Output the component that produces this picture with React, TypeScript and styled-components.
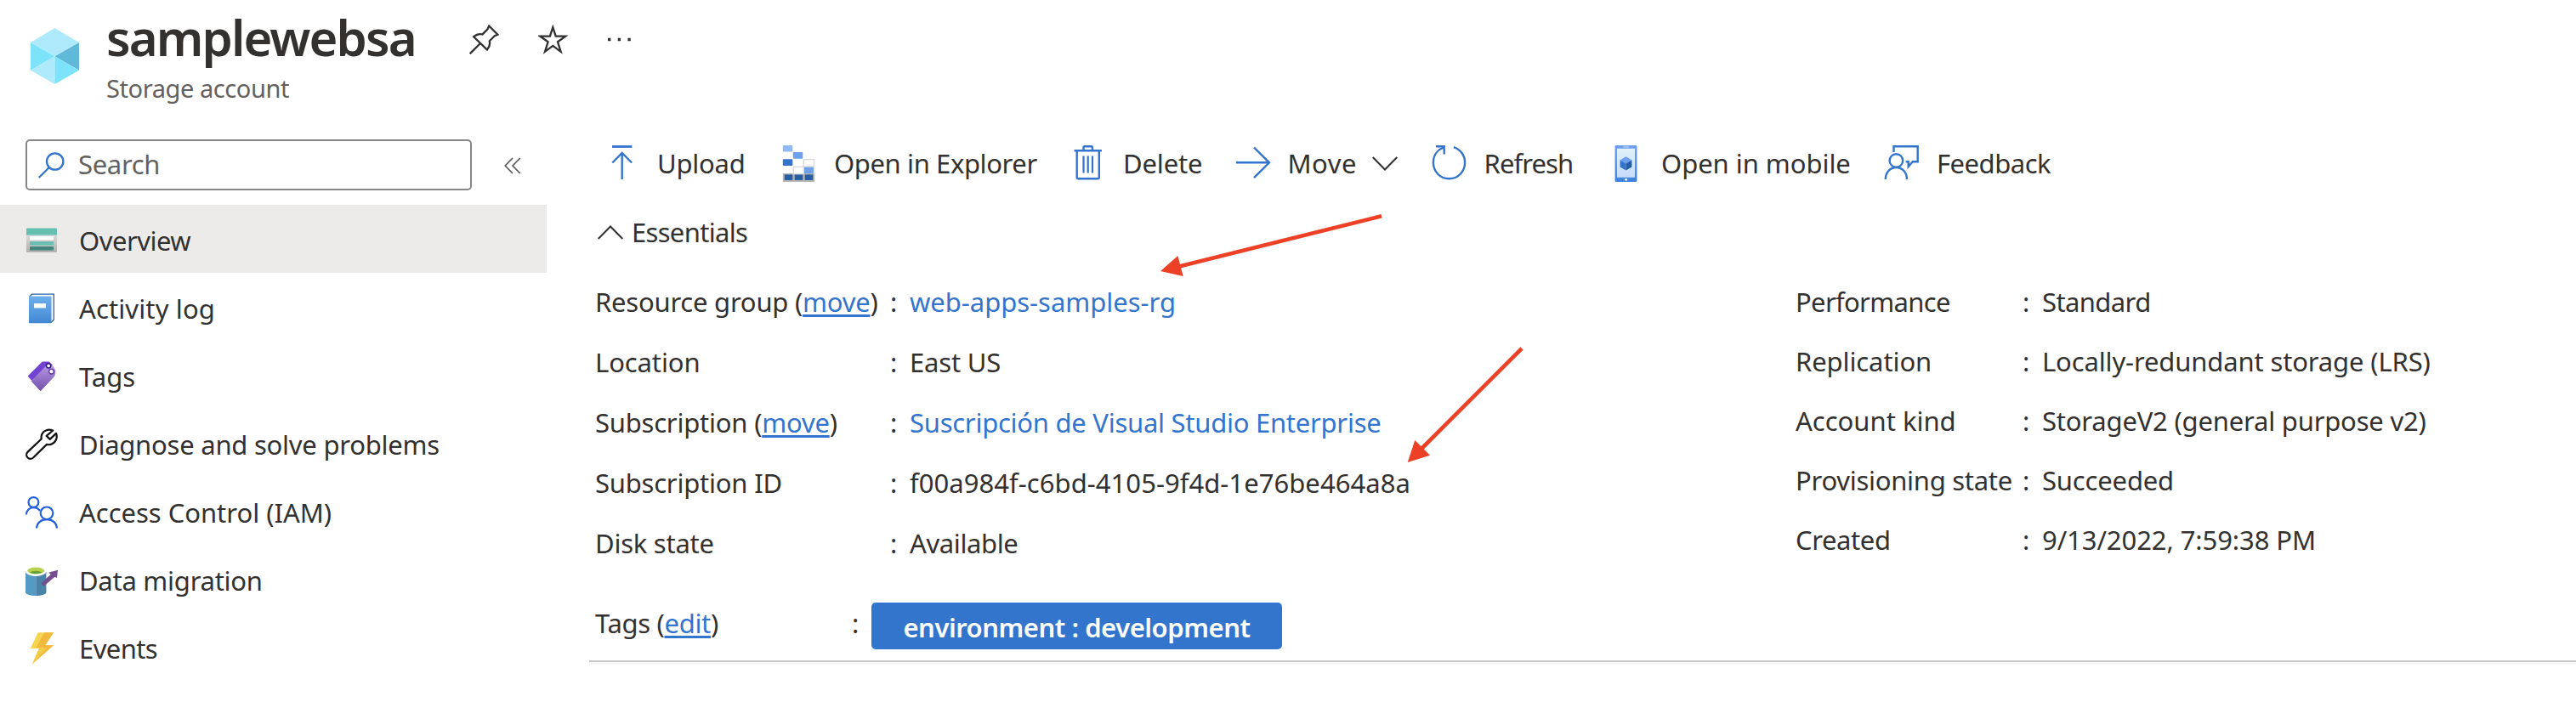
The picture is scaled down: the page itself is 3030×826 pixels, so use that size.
import React from 'react';
import styled, { createGlobalStyle } from 'styled-components';

const ink = '#323130';
const muted = '#636160';
const blue = '#3375cd';

const GlobalStyle = createGlobalStyle`
  * { box-sizing: border-box; }
  html, body { margin: 0; padding: 0; background: #fff; }
  body {
    font-family: "Noto Sans", "Open Sans", sans-serif;
    font-size: 31px;
    color: ${ink};
  }
`;

const Page = styled.div`
  position: relative;
  width: 3030px;
  height: 826px;
  overflow: hidden;
  background: #fff;
`;

/* ---------- text ---------- */

const Label = styled.span<{ $track?: number }>`
  letter-spacing: ${(p) => p.$track ?? 0}px;
  white-space: nowrap;
`;

const Link = styled.a<{ $underline?: boolean }>`
  color: ${blue};
  text-decoration: ${(p) => (p.$underline ? 'underline' : 'none')};
  text-decoration-thickness: 3px;
  text-underline-offset: 3px;
  text-decoration-skip-ink: none;
`;

/* ---------- header ---------- */

const Header = styled.header`
  display: flex;
  align-items: flex-start;
  height: 121px;
  padding-left: 36px;
`;

const ResourceIcon = styled.svg`
  width: 57px;
  height: 66px;
  margin-top: 33px;
`;

const TitleBlock = styled.div`
  width: 427px;
  margin-left: 32px;
`;

const Title = styled.h1`
  margin: 0;
  font-size: 58px;
  line-height: 87px;
  font-weight: 600;
  letter-spacing: -1.9px;
`;

const Subtitle = styled.div`
  font-size: 29px;
  line-height: 34px;
  letter-spacing: -0.42px;
  color: ${muted};
`;

const HeaderActions = styled.div`
  display: flex;
  align-items: center;
  margin-top: 29px;
  gap: 45.5px;
`;

const ActionIcon = styled.svg`
  width: 35px;
  height: 35px;
  fill: none;
  stroke: ${ink};
  stroke-width: 2.3;
`;

/* ---------- side menu ---------- */

const Body = styled.div`
  display: flex;
`;

const SideMenu = styled.aside`
  width: 643px;
  padding-top: 43px;
`;

const SearchRow = styled.div`
  display: flex;
  align-items: center;
  padding-left: 30px;
  gap: 38px;
`;

const SearchBox = styled.div`
  display: flex;
  align-items: center;
  width: 525px;
  height: 60px;
  padding: 0 13px;
  gap: 16px;
  border: 2px solid #868686;
  border-radius: 5px;
  color: ${muted};
`;

const SearchText = styled(Label)`
  padding-bottom: 2px;
`;

const SearchGlyph = styled.svg`
  width: 31px;
  height: 31px;
  fill: none;
  stroke: ${blue};
  stroke-width: 2.3;
`;

const CollapseGlyph = styled.svg`
  width: 20px;
  height: 20px;
  margin-top: 2px;
  fill: none;
  stroke: #555;
  stroke-width: 1.6;
`;

const Nav = styled.nav`
  margin-top: 17px;
`;

const NavItem = styled.div<{ $selected?: boolean }>`
  display: flex;
  align-items: center;
  height: 80px;
  padding: 3px 0 0 30px;
  gap: 25px;
  background: ${(p) => (p.$selected ? '#ecebe9' : 'transparent')};
`;

const NavIcon = styled.svg`
  width: 38px;
  height: 38px;
  overflow: visible;
`;

/* ---------- content ---------- */

const Content = styled.main`
  flex: 1;
  padding: 41px 0 0 50px;
`;

const Toolbar = styled.div`
  display: grid;
  grid-template-columns: 208px 340px 193.5px 231px 208.5px 324px auto;
  align-items: center;
  height: 60px;
  margin-left: 16px;
`;

const Command = styled.div`
  display: flex;
  align-items: center;
`;

const CommandIcon = styled.svg`
  width: 45px;
  height: 46px;
  margin-right: 19px;
  fill: none;
  stroke: ${blue};
  stroke-width: 2.4;
`;

const Chevron = styled.svg`
  width: 30px;
  height: 17px;
  fill: none;
  stroke: ${ink};
  stroke-width: 2;
`;

const MenuChevron = styled(Chevron)`
  margin-left: 18px;
`;

const EssentialsToggle = styled.div`
  display: flex;
  align-items: center;
  height: 50px;
  margin: 26px 0 0 10px;
  gap: 10px;
`;

const Properties = styled.section`
  display: flex;
  align-items: flex-start;
  height: 354px;
  margin: 22px 0 0 7px;
`;

const PropertyList = styled.dl<{ $columns: string; $pitch: number; $width?: number }>`
  display: grid;
  grid-template-columns: ${(p) => p.$columns};
  grid-auto-rows: ${(p) => p.$pitch}px;
  line-height: ${(p) => p.$pitch}px;
  width: ${(p) => (p.$width ? `${p.$width}px` : 'auto')};
  margin: 0;
`;

const Term = styled.dt<{ $track: number }>`
  letter-spacing: ${(p) => p.$track}px;
  white-space: nowrap;
`;

const Value = styled.dd<{ $track: number }>`
  margin: 0;
  letter-spacing: ${(p) => p.$track}px;
  white-space: nowrap;
`;

const TagsRow = styled.div`
  display: grid;
  grid-template-columns: 302px 23px auto;
  justify-content: start;
  height: 55px;
  margin: 35px 0 0 7px;
  line-height: 49px;
`;

const TagChip = styled.div`
  width: 483px;
  height: 55px;
  padding-top: 2px;
  border-radius: 5px;
  background: ${blue};
  color: #fff;
  font-weight: 600;
  line-height: 55px;
  text-align: center;
  letter-spacing: -0.47px;
`;

const Divider = styled.div`
  height: 5px;
  margin-top: 13px;
  border-top: 2px solid #c8c8c8;
  background: #f7f7f7;
`;

const Annotations = styled.svg`
  position: absolute;
  inset: 0;
  width: 3030px;
  height: 826px;
  pointer-events: none;
`;

/* ---------- data ---------- */

type Entry = { term: string; link?: string; track: number; value: string; valueTrack: number; isLink?: boolean };

const leftEntries: Entry[] = [
  { term: 'Resource group', link: 'move', track: -0.23, value: 'web-apps-samples-rg', valueTrack: -0.02, isLink: true },
  { term: 'Location', track: -0.1, value: 'East US', valueTrack: -0.2 },
  { term: 'Subscription', link: 'move', track: -0.22, value: 'Suscripción de Visual Studio Enterprise', valueTrack: -0.26, isLink: true },
  { term: 'Subscription ID', track: -0.22, value: 'f00a984f-c6bd-4105-9f4d-1e76be464a8a', valueTrack: 0.05 },
  { term: 'Disk state', track: -0.25, value: 'Available', valueTrack: -0.38 },
];

const rightEntries: Entry[] = [
  { term: 'Performance', track: -0.68, value: 'Standard', valueTrack: -0.6 },
  { term: 'Replication', track: -0.1, value: 'Locally-redundant storage (LRS)', valueTrack: -0.14 },
  { term: 'Account kind', track: 0, value: 'StorageV2 (general purpose v2)', valueTrack: -0.2 },
  { term: 'Provisioning state', track: -0.28, value: 'Succeeded', valueTrack: -0.17 },
  { term: 'Created', track: -0.4, value: '9/13/2022, 7:59:38 PM', valueTrack: -0.08 },
];

const Entries = ({ items }: { items: Entry[] }) => (
  <>
    {items.map((e) => (
      <React.Fragment key={e.term}>
        <Term $track={e.track}>
          {e.term}
          {e.link && <> (<Link $underline>{e.link}</Link>)</>}
        </Term>
        <span>:</span>
        <Value $track={e.valueTrack}>{e.isLink ? <Link>{e.value}</Link> : e.value}</Value>
      </React.Fragment>
    ))}
  </>
);

/* ---------- menu icons ---------- */

const OverviewIcon = () => (
  <NavIcon viewBox="0 0 38 38">
    <defs>
      <linearGradient id="ov" x1="0" y1="0" x2="0" y2="1">
        <stop offset="0" stopColor="#eaeaea" />
        <stop offset="1" stopColor="#b0b0b0" />
      </linearGradient>
    </defs>
    <rect x="1" y="4.5" width="36" height="28.5" rx="1" fill="url(#ov)" />
    <path d="M1 12.5V5.5a1 1 0 0 1 1-1h34a1 1 0 0 1 1 1v7z" fill="#66c0b1" />
    <rect x="5" y="14" width="28" height="4.6" rx=".6" fill="#fff" />
    <rect x="5" y="20.2" width="28" height="4.4" rx=".6" fill="#66c0b1" />
    <rect x="5" y="26" width="28" height="4.6" rx=".6" fill="#43847b" />
  </NavIcon>
);

const ActivityIcon = () => (
  <NavIcon viewBox="0 0 38 38">
    <defs>
      <linearGradient id="al" x1="0" y1="0" x2="0" y2="1">
        <stop offset="0" stopColor="#6fb0ec" />
        <stop offset="1" stopColor="#4287d2" />
      </linearGradient>
    </defs>
    <path d="M4.6 5.5 7.4 2.1H33.3V32L30 35.6" fill="#fff" stroke="#2b61a5" strokeWidth="1.3" />
    <rect x="4" y="4.6" width="26.5" height="31.7" rx="1" fill="url(#al)" />
    <rect x="10" y="13" width="14" height="5.4" fill="#fff" />
  </NavIcon>
);

const TagsIcon = () => (
  <NavIcon viewBox="0 0 38 38">
    <defs>
      <linearGradient id="tg" x1="0" y1="0" x2="0" y2="1">
        <stop offset="0" stopColor="#b796e3" />
        <stop offset="1" stopColor="#7350ad" />
      </linearGradient>
    </defs>
    <path d="M2.6 18.6 19.2 2q.6-.6 1.4-.6h7L32 5.8 7.3 23.8z" fill="#7243d1" />
    <path d="M6.6 24.6 24.6 6q.5-.5 1.4-.4l6.3.9 3.2 5.4-1 6.2q-.1.6-.6 1L17.7 36.3z" fill="url(#tg)" />
    <circle cx="27.1" cy="6.3" r="2.6" fill="#fff" stroke="#32197c" strokeWidth="1.5" />
    <circle cx="30.4" cy="13.2" r="2.8" fill="#fff" stroke="#6035a8" strokeWidth="1.3" />
  </NavIcon>
);

const WrenchIcon = () => (
  <NavIcon viewBox="0 0 38 38" fill="none" stroke="#111" strokeWidth="2.2" strokeLinejoin="round">
    <path d="M32.2 2.5C26.5.4 20.6 2.6 18.9 8c-.4 1.5-.4 3-.2 4.5L2.7 27.6c-2 2-2 4.8-.3 6.7 1.9 2 4.700 2 6.700.2L25 18.900c1.600.4 3.200.5 4.800 0 5.600-1.600 8.300-7.600 6.200-13l-7.300 7-4-4z" />
  </NavIcon>
);

const PeopleIcon = () => (
  <NavIcon viewBox="0 0 38 38" fill="none" stroke="#2560dc" strokeWidth="2.2">
    <circle cx="9.4" cy="7" r="5.9" />
    <path d="M1 21.5c0-4.800 3.500-8.400 8.400-8.400 3.200 0 5.800 1.400 7.600 3.900" />
    <circle cx="25" cy="19.8" r="7.3" />
    <path d="M13.100 37.500c0-6 5.100-10.400 11.900-10.400s11.900 4.400 11.900 10.400" />
  </NavIcon>
);

const MigrationIcon = () => (
  <NavIcon viewBox="0 0 38 38">
    <path d="M0 8v25c0 2.300 5.400 4 12.200 4V8z" fill="#5599c5" />
    <path d="M24.400 8v25c0 2.300-5.400 4-12.200 4V8z" fill="#4a83aa" />
    <ellipse cx="12.2" cy="8.3" rx="12.2" ry="5.6" fill="#fff" />
    <ellipse cx="12.2" cy="7.4" rx="10" ry="3.9" fill="#b9d24c" />
    <path d="M5 9.800c1.300-1.300 4-2 7.200-2s5.900.7 7.200 2c-1.800.9-4.400 1.500-7.200 1.500S6.800 10.700 5 9.800z" fill="#6a9f36" />
    <path d="M18.300 22.300 29.500 12l-1.900-2.500 10.400-2.700-1 9.200-2.600-1.200L21.300 26z" fill="#75508f" />
  </NavIcon>
);

const EventsIcon = () => (
  <NavIcon viewBox="0 0 38 38">
    <path d="M14.700.2H33L23.200 15.300H33L8 37.200l8-18.300H5.700z" fill="#f6d550" />
    <path d="M22.500.2H33L23.200 15.300H33L8 37.200 21.500 18h-9.300z" fill="#f2b93f" />
    <path d="M16 18.900h8.500L8 37.200z" fill="#f4ca4a" />
  </NavIcon>
);

const menu = [
  { text: 'Overview', track: -0.5, Icon: OverviewIcon },
  { text: 'Activity log', track: 0.12, Icon: ActivityIcon },
  { text: 'Tags', track: 0, Icon: TagsIcon },
  { text: 'Diagnose and solve problems', track: -0.24, Icon: WrenchIcon },
  { text: 'Access Control (IAM)', track: -0.02, Icon: PeopleIcon },
  { text: 'Data migration', track: -0.26, Icon: MigrationIcon },
  { text: 'Events', track: -0.6, Icon: EventsIcon },
];

/* ---------- app ---------- */

export default function App() {
  return (
    <Page>
      <GlobalStyle />
      <Header>
        <ResourceIcon viewBox="0 0 57 66">
          <path d="M28.400 0 57 17 28.400 33.300 0 17z" fill="#aeeafb" />
          <path d="M0 17 28.400 33.300 0 49.700z" fill="#7de3fb" />
          <path d="M57 17v32.700L28.400 33.300z" fill="#61b9d9" />
          <path d="M28.400 33.300V66L0 49.700z" fill="#aeeafb" />
          <path d="M28.400 33.300 57 49.700 28.400 66z" fill="#7de3fb" />
        </ResourceIcon>
        <TitleBlock>
          <Title>samplewebsa</Title>
          <Subtitle>Storage account</Subtitle>
        </TitleBlock>
        <HeaderActions>
          <ActionIcon viewBox="0 0 35 35">
            <path d="M23.200 1.500 33.400 11.700l-3.600 1.600-6 6c.8 3.700-.1 7.200-2.800 10.300L5.200 14.200c3-2.700 6.600-3.600 10.300-2.800l6-6zM13 22 .8 34.200" />
          </ActionIcon>
          <ActionIcon viewBox="0 0 35 35">
            <path d="M17.300 3.200 20.700 13.700H32.200L23 20.300 26.600 31.800 17.300 24.900 8 31.800 11.600 20.300 2.400 13.700H13.900z" />
          </ActionIcon>
          <ActionIcon viewBox="0 0 35 35">
            <path d="M2 17.500h3.400M13.700 17.500h3.400M25.400 17.500h3.400" strokeWidth="3.4" />
          </ActionIcon>
        </HeaderActions>
      </Header>

      <Body>
        <SideMenu>
          <SearchRow>
            <SearchBox>
              <SearchGlyph viewBox="0 0 31 31">
                <circle cx="19.7" cy="11" r="9.7" />
                <path d="M12.800 18 .8 30" />
              </SearchGlyph>
              <SearchText $track={-0.33}>Search</SearchText>
            </SearchBox>
            <CollapseGlyph viewBox="0 0 20 20">
              <path d="M10 1 1.200 10 10 19M18.800 1 10 10l8.800 9" />
            </CollapseGlyph>
          </SearchRow>
          <Nav>
            {menu.map(({ text, track, Icon }, i) => (
              <NavItem key={text} $selected={i === 0}>
                <Icon />
                <Label $track={track}>{text}</Label>
              </NavItem>
            ))}
          </Nav>
        </SideMenu>

        <Content>
          <Toolbar>
            <Command>
              <CommandIcon viewBox="0 0 45 46">
                <path d="M11 3.500h23.400" strokeWidth="2.8" />
                <path d="M22.700 42V11M11.300 22.500 22.700 11l11.400 11.500" />
              </CommandIcon>
              <Label $track={-0.23}>Upload</Label>
            </Command>
            <Command>
              <CommandIcon viewBox="0 0 45 48">
                <g stroke="none">
                  <rect x="3" y="2" width="12" height="8" rx=".8" fill="#8ebaf6" />
                  <rect x="15.5" y="10.5" width="12" height="8" rx=".8" fill="#6ea1ea" />
                  <rect x="3" y="19" width="12" height="8" rx=".8" fill="#3375cd" />
                  <rect x="3" y="36.5" width="39" height="10.5" fill="#b5b5b5" />
                  <rect x="28.5" y="28.5" width="12.5" height="8" fill="#6ea1ea" />
                  <rect x="5" y="38" width="10" height="6.8" fill="#255ea3" />
                  <rect x="17.5" y="38" width="10" height="6.8" fill="#255ea3" />
                  <rect x="30" y="38" width="10" height="6.8" fill="#255ea3" />
                </g>
                <g stroke="#dcdcdc" strokeWidth="1.5">
                  <rect x="28.5" y="19.5" width="12.7" height="8.5" />
                  <rect x="16" y="28.5" width="12.5" height="8.5" />
                  <path d="M41.300 28v9" />
                </g>
              </CommandIcon>
              <Label $track={-0.39}>Open in Explorer</Label>
            </Command>
            <Command>
              <CommandIcon viewBox="0 0 45 46">
                <path d="M6.600 8.300h32.300M17.500 8V4.600q0-1.300 1.300-1.300h7.800q1.300 0 1.300 1.300V8M9.700 8.300v31.200q0 1.700 1.700 1.700h22.700q1.700 0 1.700-1.700V8.300" />
                <path d="M17.500 14.500v20M22.700 14.500v20M28 14.500v20" strokeWidth="2.2" />
              </CommandIcon>
              <Label $track={-0.15}>Delete</Label>
            </Command>
            <Command>
              <CommandIcon viewBox="0 0 45 46">
                <path d="M3 22.300H42M24 4.500 42 22.300 24 40.200" />
              </CommandIcon>
              <Label $track={0.5}>Move</Label>
              <MenuChevron viewBox="0 0 30 17">
                <path d="M.7 1 15 15.500 29.300 1" />
              </MenuChevron>
            </Command>
            <Command>
              <CommandIcon viewBox="0 0 45 46">
                <path d="M16.500 4.300C8.800 7 3.900 13.700 3.900 22.300c0 10.500 8 19 18.600 19s18.600-8.500 18.600-19c0-8.400-5.300-15.600-13.200-18.200" />
                <path d="M7 3.300h9.700v9.200" />
              </CommandIcon>
              <Label $track={-0.9}>Refresh</Label>
            </Command>
            <Command>
              <CommandIcon viewBox="0 0 45 48">
                <defs>
                  <linearGradient id="ph" x1="0" y1="0" x2="0" y2="1">
                    <stop offset="0" stopColor="#6fa0ec" />
                    <stop offset="1" stopColor="#3f82dc" />
                  </linearGradient>
                  <linearGradient id="sc" x1="0" y1="0" x2="0" y2="1">
                    <stop offset="0" stopColor="#dff1fa" />
                    <stop offset="1" stopColor="#c6ddf8" />
                  </linearGradient>
                </defs>
                <g stroke="none">
                  <rect x="9" y="2" width="27" height="45" rx="1.5" fill="url(#ph)" />
                  <rect x="11.5" y="6" width="22" height="35.5" fill="url(#sc)" />
                  <rect x="19" y="3.2" width="7" height="1.6" fill="#a9c8f4" />
                  <rect x="21" y="43" width="3.2" height="2.4" fill="#fff" />
                  <path d="m22.500 16 7.200 4.200-7.200 4.200-7.200-4.200z" fill="#6fa0ec" />
                  <path d="m15.300 20.200 7.200 4.200v8.400l-7.200-4.200z" fill="#3375cd" />
                  <path d="m29.700 20.200-7.200 4.200v8.400l7.200-4.200z" fill="#255ea3" />
                </g>
              </CommandIcon>
              <Label $track={-0.05}>Open in mobile</Label>
            </Command>
            <Command>
              <CommandIcon viewBox="0 0 45 46">
                <circle cx="16.4" cy="20" r="7.8" />
                <path d="M3.800 42c0-8 5.400-14 12.600-14S29 34 29 42" />
                <path d="M13.500 10V3.300h28.200v18h-6l-5 5.700v-5.700h-3" />
              </CommandIcon>
              <Label $track={-0.48}>Feedback</Label>
            </Command>
          </Toolbar>

          <EssentialsToggle>
            <Chevron viewBox="0 0 30 17">
              <path d="M.7 16 15 1.500 29.300 16" />
            </Chevron>
            <Label $track={-0.69}>Essentials</Label>
          </EssentialsToggle>

          <Properties>
            <PropertyList $columns="347px 23px auto" $pitch={71} $width={1412}>
              <Entries items={leftEntries} />
            </PropertyList>
            <PropertyList $columns="267px 23px auto" $pitch={70}>
              <Entries items={rightEntries} />
            </PropertyList>
          </Properties>

          <TagsRow>
            <Label $track={-0.32}>
              Tags (<Link $underline>edit</Link>)
            </Label>
            <span>:</span>
            <TagChip>environment : development</TagChip>
          </TagsRow>
          <Divider />
        </Content>
      </Body>

      <Annotations viewBox="0 0 3030 826">
        <g fill="#ec4027" stroke="#ec4027">
          <path d="M1625 254.300 1387 313.500M1790 410 1671 529" strokeWidth="4.6" />
          <path d="M1365 319 1385.400 301 1391.700 325zM1655.700 544 1664.300 518 1682 535.700z" stroke="none" />
        </g>
      </Annotations>
    </Page>
  );
}
